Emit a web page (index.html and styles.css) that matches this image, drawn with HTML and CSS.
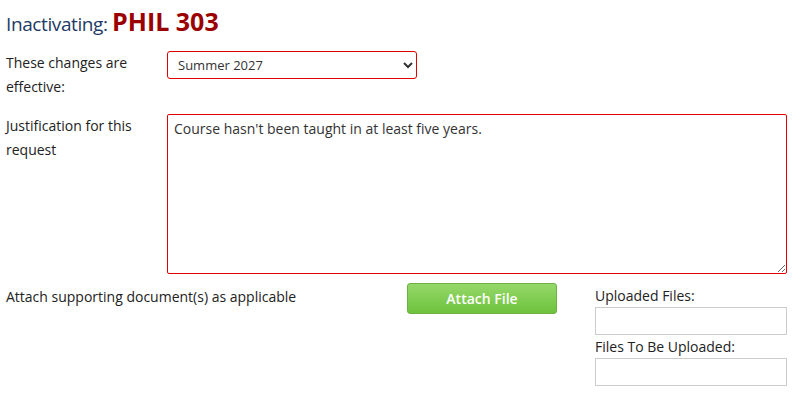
FILE: index.html
```html
<!DOCTYPE html>
<html>
<head>
    <title>Inactivate Course</title>
    <link rel="stylesheet" href="styles.css">
</head>
<body>
    <h1>Inactivating: <span class="course">PHIL 303</span></h1>

    <div class="row first">
        <label class="label" for="term">These changes are effective:</label>
        <select id="term" class="term">
            <option>Summer 2027</option>
        </select>
    </div>

    <div class="row">
        <label class="label" for="why">Justification for this request</label>
        <textarea id="why" class="why">Course hasn't been taught in at least five years.</textarea>
    </div>

    <div class="attach">
        <div class="label">Attach supporting document(s) as applicable</div>
        <div class="btn-cell">
            <button class="btn">Attach File</button>
        </div>
        <div class="files">
            <div class="files-title">Uploaded Files:</div>
            <div class="file-box"></div>
            <div class="files-title next">Files To Be Uploaded:</div>
            <div class="file-box"></div>
        </div>
    </div>
</body>
</html>
```

FILE: styles.css
```css
body {
    font-family: "Open Sans", Arial, sans-serif;
    font-size: 14px;
    color: #222;
    margin: 0;
    padding: 6px 9px 0 6px;
}
h1 {
    font-size: 19px;
    font-weight: normal;
    letter-spacing: -0.4px;
    color: #1e3a66;
    margin: 0 0 12px 0;
    line-height: 30px;
}
.course {
    font-size: 25px;
    font-weight: bold;
    letter-spacing: 0;
    color: #9b0000;
}
.row {
    display: grid;
    grid-template-columns: 161px 1fr;
    margin-bottom: 9px;
}
.row.first {
    margin-bottom: 15px;
}
.label {
    line-height: 24px;
    padding-right: 20px;
}
.term {
    width: 250px;
    height: 28px;
    border: 1px solid #e00000;
    border-radius: 3px;
    background: #fff;
    font-family: "Open Sans", Arial, sans-serif;
    font-size: 13px;
    color: #333;
    padding: 0 6px;
}
.why {
    height: 160px;
    border: 1px solid #e00000;
    border-radius: 2px;
    font-family: "Open Sans", Arial, sans-serif;
    font-size: 14px;
    color: #333;
    padding: 4px 6px;
    box-sizing: border-box;
    margin: 0;
    resize: vertical;
}
.attach {
    display: grid;
    grid-template-columns: 401px 188px 1fr;
}
.attach .label {
    padding-top: 2px;
}
.btn {
    width: 150px;
    height: 31px;
    border: 1px solid #6db043;
    border-radius: 3px;
    background: linear-gradient(#95d869, #6ec23d);
    color: #fff;
    font-family: "Open Sans", Arial, sans-serif;
    font-size: 14px;
    font-weight: 600;
}
.files-title {
    line-height: 22px;
    padding-top: 2px;
}
.files-title.next {
    padding-top: 1px;
}
.file-box {
    height: 26px;
    border: 1px solid #ccc;
}
```
